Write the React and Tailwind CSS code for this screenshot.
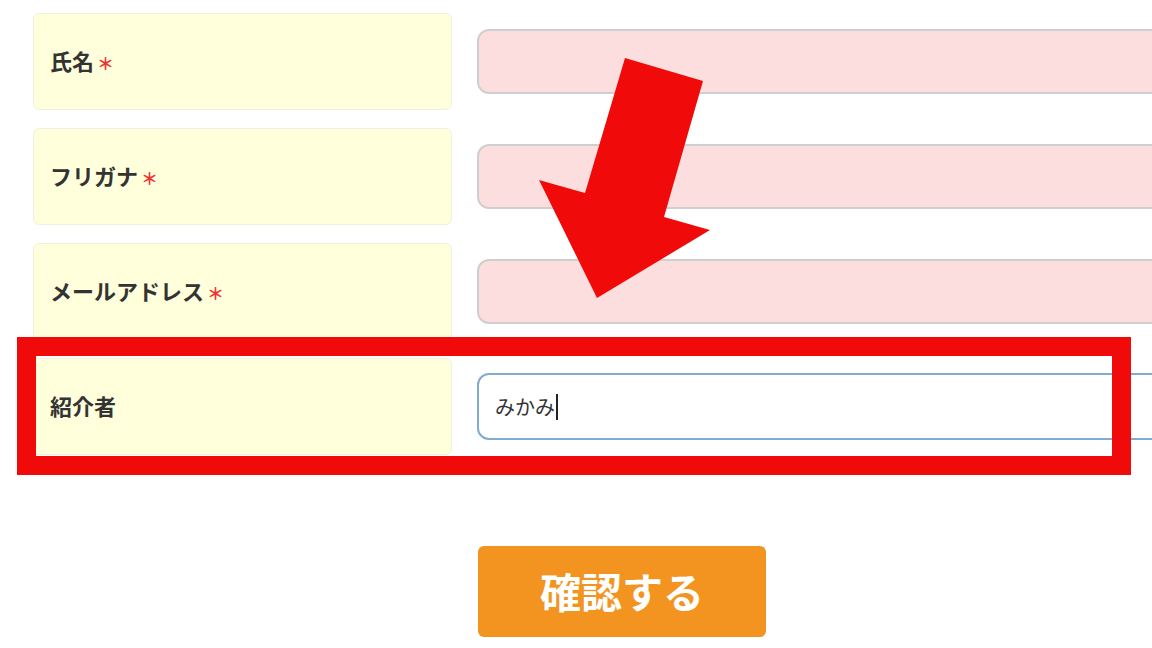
const fields = [
  { label: '氏名', required: true, value: '' },
  { label: 'フリガナ', required: true, value: '' },
  { label: 'メールアドレス', required: true, value: '' },
  { label: '紹介者', required: false, value: 'みかみ', focused: true }
];

function Row({ f }) {
  return (
    <div className="flex items-center gap-[25px]">
      <div className="w-[419px] h-[97px] shrink-0 flex items-center pl-[16px] pb-[3px] rounded-md bg-[#ffffdc] border border-[#f0f0e0]">
        <span className="text-[22px] font-bold text-[#333]">{f.label}</span>
        {f.required ? <span className="ml-[3px] text-[17px] font-bold text-[#ee3333] leading-none mt-[4px]">＊</span> : null}
      </div>
      {f.focused ? (
        <div className="w-[720px] h-[67px] shrink-0 rounded-[12px] border-2 border-[#82aad2] bg-white flex items-center pl-[16px]">
          <span className="text-[20px] text-[#333]">{f.value}</span>
          <span className="w-[2px] h-[26px] bg-[#222] ml-[1px]" />
        </div>
      ) : (
        <div className="w-[720px] h-[65px] shrink-0 rounded-[12px] border-2 border-[#cfcfcf] bg-[#fddede]" />
      )}
    </div>
  );
}

export default function App() {
  return (
    <div
      className="relative w-[1152px] h-[648px] overflow-hidden bg-white"
      style={{ fontFamily: '"Noto Sans CJK JP", "Noto Sans", sans-serif' }}
    >
      <div className="flex flex-col gap-[18px] pt-[13px] pl-[33px]">
        {fields.map((f) => (
          <Row key={f.label} f={f} />
        ))}
      </div>

      <div className="flex pl-[478px] mt-[91px]">
        <button
          type="button"
          className="w-[288px] h-[91px] rounded-[6px] bg-[#f39420] text-white text-[41px] font-bold flex items-center justify-center pb-[2px]"
        >
          確認する
        </button>
      </div>

      {/* red highlight box */}
      <div className="absolute left-[17px] top-[337px] w-[1114px] h-[138px] border-[19px] border-[#f00a0a]" />

      {/* arrow */}
      <svg className="absolute left-0 top-0" width="1152" height="648" viewBox="0 0 1152 648">
        <polygon
          points="625,58 703,81 664,217 710,230 597,298 539,180 585,193"
          fill="#f00a0a"
        />
      </svg>
    </div>
  );
}
